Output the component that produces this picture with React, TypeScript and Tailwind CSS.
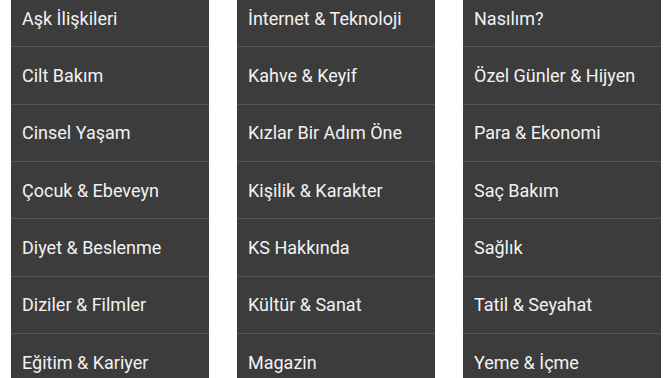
const COLUMNS = [
  ["Aşk İlişkileri", "Cilt Bakım", "Cinsel Yaşam", "Çocuk & Ebeveyn", "Diyet & Beslenme", "Diziler & Filmler", "Eğitim & Kariyer"],
  ["İnternet & Teknoloji", "Kahve & Keyif", "Kızlar Bir Adım Öne", "Kişilik & Karakter", "KS Hakkında", "Kültür & Sanat", "Magazin"],
  ["Nasılım?", "Özel Günler & Hijyen", "Para & Ekonomi", "Saç Bakım", "Sağlık", "Tatil & Seyahat", "Yeme & İçme"],
];

export default function App() {
  return (
    <div
      className="w-[672px] h-[378px] overflow-hidden bg-white"
      style={{ fontFamily: "Roboto, 'Noto Sans', sans-serif" }}
    >
      <div className="grid grid-cols-3 gap-x-[28px] px-[11px] mt-[-10px]">
        {COLUMNS.map((col, ci) => (
          <ul key={ci} className="bg-[#3c3c3c]">
            {col.map((label) => (
              <li
                key={label}
                className="h-[57.33px] flex items-center px-[11px] border-b border-[#545454] text-[18px] text-[#f2f2f2]"
              >
                {label}
              </li>
            ))}
          </ul>
        ))}
      </div>
    </div>
  );
}
